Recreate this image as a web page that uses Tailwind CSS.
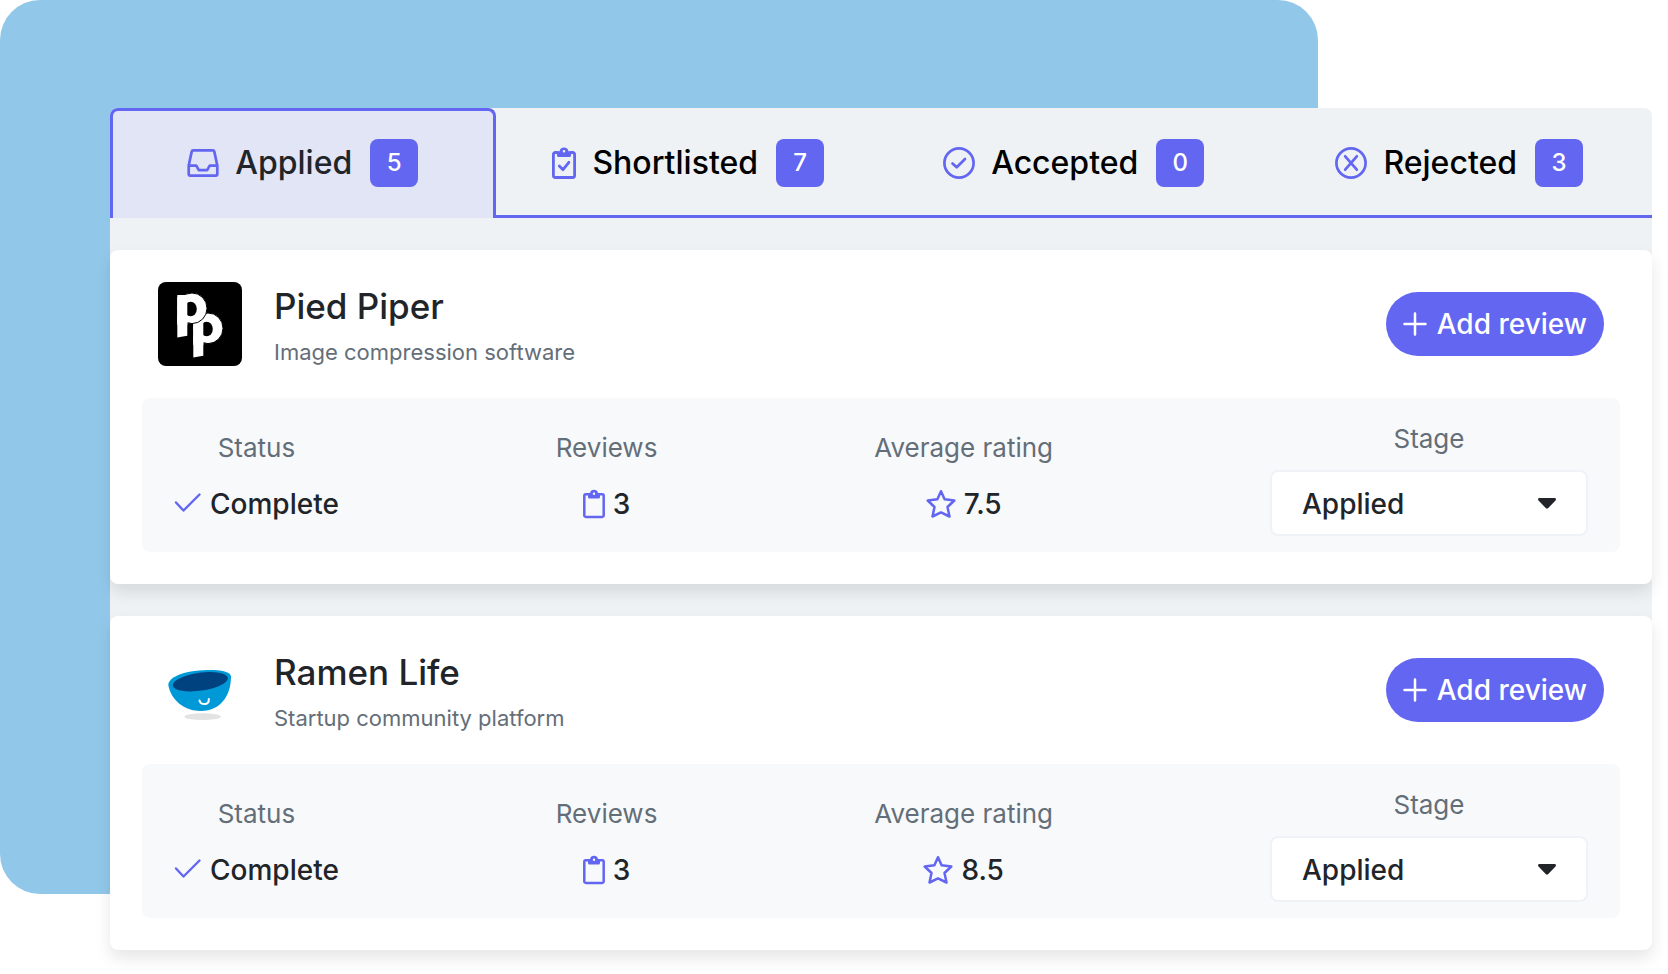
<!DOCTYPE html>
<html lang="en">
    <head>
        <meta charset="UTF-8" />
        <meta name="viewport" content="width=device-width, initial-scale=1.0" />
        <title>Applications</title>
        <script src="https://cdn.jsdelivr.net/npm/@tailwindcss/browser@4"></script>
    </head>
    <body class="bg-white font-['Inter',sans-serif] text-[#212529]">
        <!-- Icons shared by the cards -->
        <svg class="hidden">
            <symbol id="check" viewBox="0 0 28 28">
                <path d="M2 12.5 9.5 20.5 25.5 4.5" fill="none" stroke="currentColor" stroke-width="2.4" stroke-linecap="round" stroke-linejoin="round" />
            </symbol>
            <symbol id="clipboard" viewBox="0 0 22 30">
                <path d="M5 5.2H2.8A1.5 1.5 0 0 0 1.3 6.7V26.4A1.5 1.5 0 0 0 2.8 27.9H19.2A1.5 1.5 0 0 0 20.7 26.4V6.7A1.500 1.500 0 0 0 19.2 5.2H17" fill="none" stroke="currentColor" stroke-width="2.5" />
                <path fill="currentColor" fill-rule="evenodd" d="M5 4H7A4.1 4.1 0 0 1 15 4H17V8A1.5 1.5 0 0 1 15.5 9.5H6.5A1.5 1.5 0 0 1 5 8ZM11 3.5A1.2 1.2 0 1 0 11 5.9A1.2 1.2 0 1 0 11 3.5Z" />
            </symbol>
            <symbol id="star" viewBox="0 0 30 30">
                <path d="M15 2.2 18.6 10.3 28.3 11.5 21.5 18 23.5 27.5 15 23.4 6.5 27.5 8.5 18 1.7 11.5 11.4 10.3Z" fill="none" stroke="currentColor" stroke-width="2.5" stroke-linejoin="round" />
            </symbol>
            <symbol id="plus" viewBox="0 0 24 24">
                <path d="M12 1.5V22.5M1.5 12H22.5" fill="none" stroke="currentColor" stroke-width="2.5" stroke-linecap="round" />
            </symbol>
            <symbol id="caret" viewBox="0 0 18 11">
                <path d="M1.5 0H16.5C17.9 0 18.4 1.5 17.5 2.5L10.3 10C9.5 10.8 8.5 10.8 7.7 10L0.5 2.5C-0.4 1.5 0.1 0 1.5 0Z" fill="currentColor" />
            </symbol>
        </svg>

        <main class="relative pt-27 pr-4 pb-6 pl-[110px]">
            <div class="absolute top-0 left-0 bottom-20 w-[79%] rounded-[40px] bg-[#91c8ea]"></div>

            <div class="relative rounded-lg bg-[#eef2f5]">
                <!-- Tabs -->
                <div role="tablist" class="grid grid-cols-4 text-[32px] font-medium text-black">
                    <button role="tab" aria-selected="true" class="flex h-[110px] items-center justify-center gap-4 rounded-t-lg border-3 border-b-0 border-[#6366f1] bg-[#e1e5f5] pb-[3px] text-[#212529]">
                        <svg class="size-8 text-[#6366f1]" viewBox="0 0 32 32" fill="none" stroke="currentColor" stroke-width="2.7" stroke-linejoin="round">
                            <path d="M1.7 18.5 4.7 4.6C4.9 3.8 5.3 3.4 6 3.4H26C26.7 3.4 27.1 3.8 27.3 4.6L30.3 18.5V27C30.3 28 29.7 28.6 28.7 28.6H3.3C2.3 28.6 1.7 28 1.7 27ZM1.7 18.7H9.3L11.8 23.2H20.2L22.7 18.7H30.3" />
                        </svg>
                        Applied
                        <span class="ml-0.5 flex size-12 items-center justify-center rounded-lg bg-[#6366f1] text-2xl text-white">5</span>
                    </button>
                    <button role="tab" aria-selected="false" class="flex h-[110px] items-center justify-center gap-4 border-y-3 border-[#6366f1] border-t-transparent">
                        <svg class="h-8 w-6 text-[#6366f1]" viewBox="0 0 24 32">
                            <path d="M5 5.5H3.4A2 2 0 0 0 1.4 7.5V28.500A2 2 0 0 0 3.4 30.5H20.6A2 2 0 0 0 22.6 28.5V7.5A2 2 0 0 0 20.6 5.5H19M7.3 19 11 22.700 16.9 15.3" fill="none" stroke="currentColor" stroke-width="2.800" stroke-linecap="round" stroke-linejoin="round" />
                            <path fill="currentColor" fill-rule="evenodd" d="M5 4.2H7.500A4.6 4.6 0 0 1 16.5 4.2H19V8.500A1.500 1.500 0 0 1 17.5 10H6.500A1.500 1.500 0 0 1 5 8.500ZM12 3A1.300 1.300 0 1 0 12 5.600A1.300 1.300 0 1 0 12 3Z" />
                        </svg>
                        Shortlisted
                        <span class="ml-0.5 flex size-12 items-center justify-center rounded-lg bg-[#6366f1] text-2xl text-white">7</span>
                    </button>
                    <button role="tab" aria-selected="false" class="flex h-[110px] items-center justify-center gap-4 border-y-3 border-[#6366f1] border-t-transparent">
                        <svg class="size-8 text-[#6366f1]" viewBox="0 0 32 32" fill="none" stroke="currentColor" stroke-width="2.7" stroke-linecap="round" stroke-linejoin="round">
                            <circle cx="16" cy="16" r="14.6" />
                            <path d="M9.5 16.5 13.7 20.3 22 12" />
                        </svg>
                        Accepted
                        <span class="ml-0.5 flex size-12 items-center justify-center rounded-lg bg-[#6366f1] text-2xl text-white">0</span>
                    </button>
                    <button role="tab" aria-selected="false" class="flex h-[110px] items-center justify-center gap-4 border-y-3 border-[#6366f1] border-t-transparent">
                        <svg class="size-8 text-[#6366f1]" viewBox="0 0 32 32" fill="none" stroke="currentColor" stroke-width="2.7" stroke-linecap="round">
                            <circle cx="16" cy="16" r="14.6" />
                            <path d="M10.2 9.3 21.8 22.7M21.8 9.3 10.2 22.7" />
                        </svg>
                        Rejected
                        <span class="ml-0.5 flex size-12 items-center justify-center rounded-lg bg-[#6366f1] text-2xl text-white">3</span>
                    </button>
                </div>

                <div class="flex flex-col gap-8 pt-8">
                    <!-- Pied Piper -->
                    <article class="flex flex-col gap-8 rounded-lg bg-white p-8 shadow-[0_8px_16px_rgba(0,0,0,0.1)]">
                        <div class="flex items-center gap-8 px-4">
                            <svg class="size-21 rounded-lg bg-black" viewBox="0 0 84 84">
                                <g id="mark" fill="#fff" transform="translate(16 20)">
                                    <ellipse cx="34" cy="26.3" rx="15" ry="15.3" stroke="#000" />
                                    <rect x="19.3" y="13" width="10" height="30" />
                                    <rect x="19.3" y="30" width="10" height="22" transform="translate(0 3.4) skewY(-10)" transform-origin="19.3 30" />
                                    <ellipse cx="32.6" cy="27" rx="6.2" ry="7.300" fill="#000" />
                                    <rect x="19.3" y="15" width="10" height="26" />
                                </g>
                                <use href="#mark" x="-16" y="-20" />
                            </svg>
                            <div class="grow">
                                <h2 class="text-[35px] leading-12 font-medium">Pied Piper</h2>
                                <p class="mt-2 text-[22px] leading-7 text-[#646e78]">Image compression software</p>
                            </div>
                            <button class="flex h-16 items-center gap-2.5 rounded-full bg-[#6366f1] px-[17px] text-[28px] font-medium text-white">
                                <svg class="size-6"><use href="#plus" /></svg>
                                Add review
                            </button>
                        </div>
                        <div class="flex items-center justify-between rounded-lg bg-[#f8f9fb] px-8 py-4">
                            <div class="flex flex-col items-center gap-4 pt-0.5 leading-10">
                                <span class="text-[26px] text-[#646e78]">Status</span>
                                <span class="flex items-center gap-2 text-[28px] font-medium">
                                    <svg class="size-7 text-[#6366f1]"><use href="#check" /></svg>
                                    Complete
                                </span>
                            </div>
                            <div class="flex flex-col items-center gap-4 pt-0.5 leading-10">
                                <span class="text-[26px] text-[#646e78]">Reviews</span>
                                <span class="flex items-center gap-2 text-[28px] font-medium">
                                    <svg class="h-[30px] w-[22px] text-[#6366f1]"><use href="#clipboard" /></svg>
                                    3
                                </span>
                            </div>
                            <div class="flex flex-col items-center gap-4 pt-0.5 leading-10">
                                <span class="text-[26px] text-[#646e78]">Average rating</span>
                                <span class="flex items-center gap-2 text-[28px] font-medium">
                                    <svg class="size-[30px] text-[#6366f1]"><use href="#star" /></svg>
                                    7.5
                                </span>
                            </div>
                            <div class="flex w-[318px] flex-col gap-1.5">
                                <label for="stagePiedPiper" class="text-center text-[26px] leading-[50px] text-[#646e78]">Stage</label>
                                <div class="relative">
                                    <select id="stagePiedPiper" class="block h-[66px] w-full appearance-none rounded-lg border-2 border-[#eff2f6] bg-white px-[30px] pt-0.5 text-[28px] font-medium">
                                        <option selected>Applied</option>
                                        <option>Shortlisted</option>
                                        <option>Accepted</option>
                                        <option>Rejected</option>
                                    </select>
                                    <svg class="pointer-events-none absolute inset-y-0 right-8 my-auto h-[11px] w-[18px]"><use href="#caret" /></svg>
                                </div>
                            </div>
                        </div>
                    </article>

                    <!-- Ramen Life -->
                    <article class="flex flex-col gap-8 rounded-lg bg-white p-8 shadow-[0_8px_16px_rgba(0,0,0,0.1)]">
                        <div class="flex items-center gap-8 px-4">
                            <svg class="size-21" viewBox="0 0 84 84">
                                <ellipse cx="44.7" cy="68.7" rx="18.2" ry="3.4" fill="#e3e3e3" />
                                <path d="M10.3 37C10 30 24 22.2 50 21.9C63 21.8 73 23.5 73 28.5C73 48 62 63 43 63C26 63 13 52 10.3 37Z" fill="#0099d8" />
                                <ellipse cx="42.3" cy="33.7" rx="27.8" ry="9" fill="#00427f" transform="rotate(-8 42.3 33.7)" />
                                <path d="M41.5 52.5C42.8 57.3 51.5 57.8 50.8 51" fill="none" stroke="#fff" stroke-width="2" stroke-linecap="round" />
                            </svg>
                            <div class="grow">
                                <h2 class="text-[35px] leading-12 font-medium">Ramen Life</h2>
                                <p class="mt-2 text-[22px] leading-7 text-[#646e78]">Startup community platform</p>
                            </div>
                            <button class="flex h-16 items-center gap-2.5 rounded-full bg-[#6366f1] px-[17px] text-[28px] font-medium text-white">
                                <svg class="size-6"><use href="#plus" /></svg>
                                Add review
                            </button>
                        </div>
                        <div class="flex items-center justify-between rounded-lg bg-[#f8f9fb] px-8 py-4">
                            <div class="flex flex-col items-center gap-4 pt-0.5 leading-10">
                                <span class="text-[26px] text-[#646e78]">Status</span>
                                <span class="flex items-center gap-2 text-[28px] font-medium">
                                    <svg class="size-7 text-[#6366f1]"><use href="#check" /></svg>
                                    Complete
                                </span>
                            </div>
                            <div class="flex flex-col items-center gap-4 pt-0.5 leading-10">
                                <span class="text-[26px] text-[#646e78]">Reviews</span>
                                <span class="flex items-center gap-2 text-[28px] font-medium">
                                    <svg class="h-[30px] w-[22px] text-[#6366f1]"><use href="#clipboard" /></svg>
                                    3
                                </span>
                            </div>
                            <div class="flex flex-col items-center gap-4 pt-0.5 leading-10">
                                <span class="text-[26px] text-[#646e78]">Average rating</span>
                                <span class="flex items-center gap-2 text-[28px] font-medium">
                                    <svg class="size-[30px] text-[#6366f1]"><use href="#star" /></svg>
                                    8.5
                                </span>
                            </div>
                            <div class="flex w-[318px] flex-col gap-1.5">
                                <label for="stageRamenLife" class="text-center text-[26px] leading-[50px] text-[#646e78]">Stage</label>
                                <div class="relative">
                                    <select id="stageRamenLife" class="block h-[66px] w-full appearance-none rounded-lg border-2 border-[#eff2f6] bg-white px-[30px] pt-0.5 text-[28px] font-medium">
                                        <option selected>Applied</option>
                                        <option>Shortlisted</option>
                                        <option>Accepted</option>
                                        <option>Rejected</option>
                                    </select>
                                    <svg class="pointer-events-none absolute inset-y-0 right-8 my-auto h-[11px] w-[18px]"><use href="#caret" /></svg>
                                </div>
                            </div>
                        </div>
                    </article>
                </div>
            </div>
        </main>
    </body>
</html>
